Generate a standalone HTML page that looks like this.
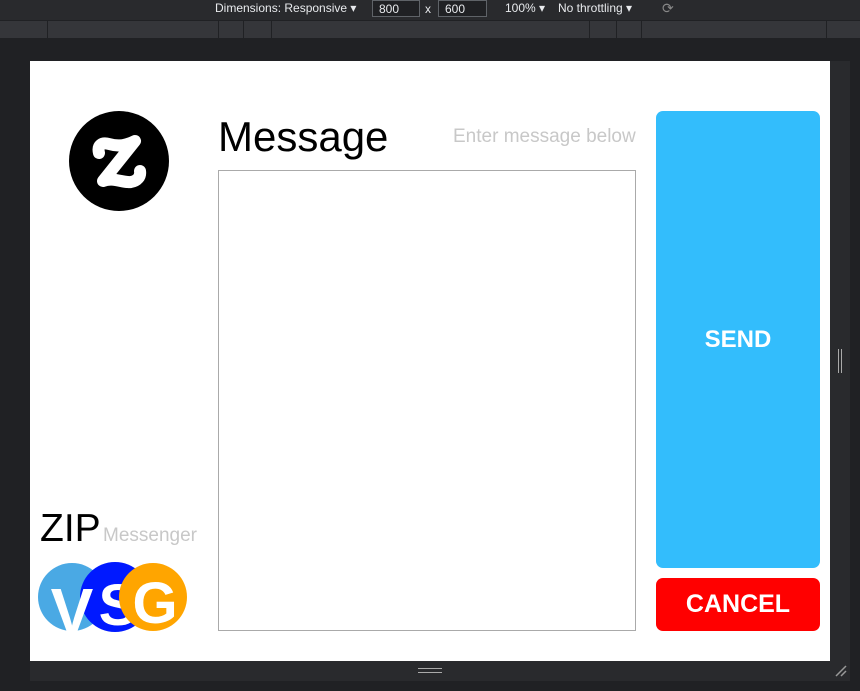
<!DOCTYPE html>
<html><head><meta charset="utf-8"><style>
body{margin:0;width:860px;height:691px;background:#202124;position:relative;overflow:hidden;font-family:"Liberation Sans",sans-serif}
.abs{position:absolute}
.top{left:0;top:0;width:860px;height:20px;background:#292a2d;color:#e8eaed;font-size:12px}
.ruler{left:0;top:21px;width:860px;height:17px;background:#35363a}
.frame{left:30px;top:61px;width:820px;height:620px;background:#292a2d}
.panel{left:30px;top:61px;width:800px;height:600px;background:#fff}
</style></head><body>
<div class="abs top">
<span class="abs" style="left:215px;top:1px">Dimensions: Responsive ▾</span>
<div class="abs" style="left:372px;top:0;width:48px;height:17px;background:#202124;border:1px solid #5f6368;box-sizing:border-box;padding:1px 6px">800</div>
<span class="abs" style="left:425px;top:2px">x</span>
<div class="abs" style="left:438px;top:0;width:49px;height:17px;background:#202124;border:1px solid #5f6368;box-sizing:border-box;padding:1px 6px">600</div>
<span class="abs" style="left:505px;top:1px">100% ▾</span>
<span class="abs" style="left:558px;top:1px">No throttling ▾</span>
<span class="abs" style="left:662px;top:0;color:#888;font-size:14px">⟳</span>
</div>
<div class="abs ruler"></div>
<div class="abs" style="left:47px;top:21px;width:1px;height:17px;background:#202124"></div>
<div class="abs" style="left:218px;top:21px;width:1px;height:17px;background:#202124"></div>
<div class="abs" style="left:243px;top:21px;width:1px;height:17px;background:#202124"></div>
<div class="abs" style="left:271px;top:21px;width:1px;height:17px;background:#202124"></div>
<div class="abs" style="left:589px;top:21px;width:1px;height:17px;background:#202124"></div>
<div class="abs" style="left:616px;top:21px;width:1px;height:17px;background:#202124"></div>
<div class="abs" style="left:641px;top:21px;width:1px;height:17px;background:#202124"></div>
<div class="abs" style="left:826px;top:21px;width:1px;height:17px;background:#202124"></div>
<div class="abs frame"></div>
<div class="abs" style="left:838px;top:349px;width:1px;height:24px;background:#aaa"></div>
<div class="abs" style="left:841px;top:349px;width:1px;height:24px;background:#aaa"></div>
<div class="abs" style="left:418px;top:668px;width:24px;height:1px;background:#aaa"></div>
<div class="abs" style="left:418px;top:672px;width:24px;height:1px;background:#aaa"></div>
<svg class="abs" style="left:834px;top:664px" width="14" height="14"><path d="M2 12L12 2M7 12L12 7" stroke="#999" stroke-width="1.5"/></svg>
<div class="abs panel"></div>
<svg class="abs" style="left:69px;top:111px" width="100" height="100" viewBox="0 0 100 100">
<circle cx="50" cy="50" r="50" fill="#000"/>
<path d="M30 42C28 34 33 31 40 33C50 36 58 34 66 30L34 70C44 66 54 72 62 71C68 70 72 66 71 60" fill="none" stroke="#fff" stroke-width="12" stroke-linecap="round" stroke-linejoin="round"/>
</svg>
<div class="abs" style="left:218px;top:113px;font-size:42px;color:#000">Message</div>
<div class="abs" style="left:453px;top:126px;font-size:19px;color:#c8c8c8">Enter message below</div>
<div class="abs" style="left:218px;top:170px;width:418px;height:461px;border:1px solid #aaa;box-sizing:border-box"></div>
<div class="abs" style="left:656px;top:111px;width:164px;height:457px;background:#33bdfc;border-radius:7px;color:#fff;font-weight:bold;font-size:24px;text-align:center;line-height:457px">SEND</div>
<div class="abs" style="left:656px;top:578px;width:164px;height:53px;background:#ff0000;border-radius:7px;color:#fff;font-weight:bold;font-size:25px;text-align:center;line-height:53px">CANCEL</div>
<div class="abs" style="left:40px;top:507px;font-size:39px;color:#000">ZIP</div>
<div class="abs" style="left:103px;top:525px;font-size:19px;color:#c8c8c8">Messenger</div>
<svg class="abs" style="left:38px;top:561px" width="152" height="72">
<circle cx="34" cy="36" r="34" fill="#4aa9e4"/>
<circle cx="77" cy="36" r="35" fill="#0019ff"/>
<text x="34" y="72" font-family="Liberation Sans" font-weight="bold" font-size="64" fill="#fff" text-anchor="middle">V</text>
<text x="80" y="64" font-family="Liberation Sans" font-weight="bold" font-size="58" fill="#fff" text-anchor="middle">S</text>
<circle cx="115" cy="36" r="34" fill="#ffa500"/>
<text x="117" y="62" font-family="Liberation Sans" font-weight="bold" font-size="58" fill="#fff" text-anchor="middle">G</text>
</svg>
</body></html>
